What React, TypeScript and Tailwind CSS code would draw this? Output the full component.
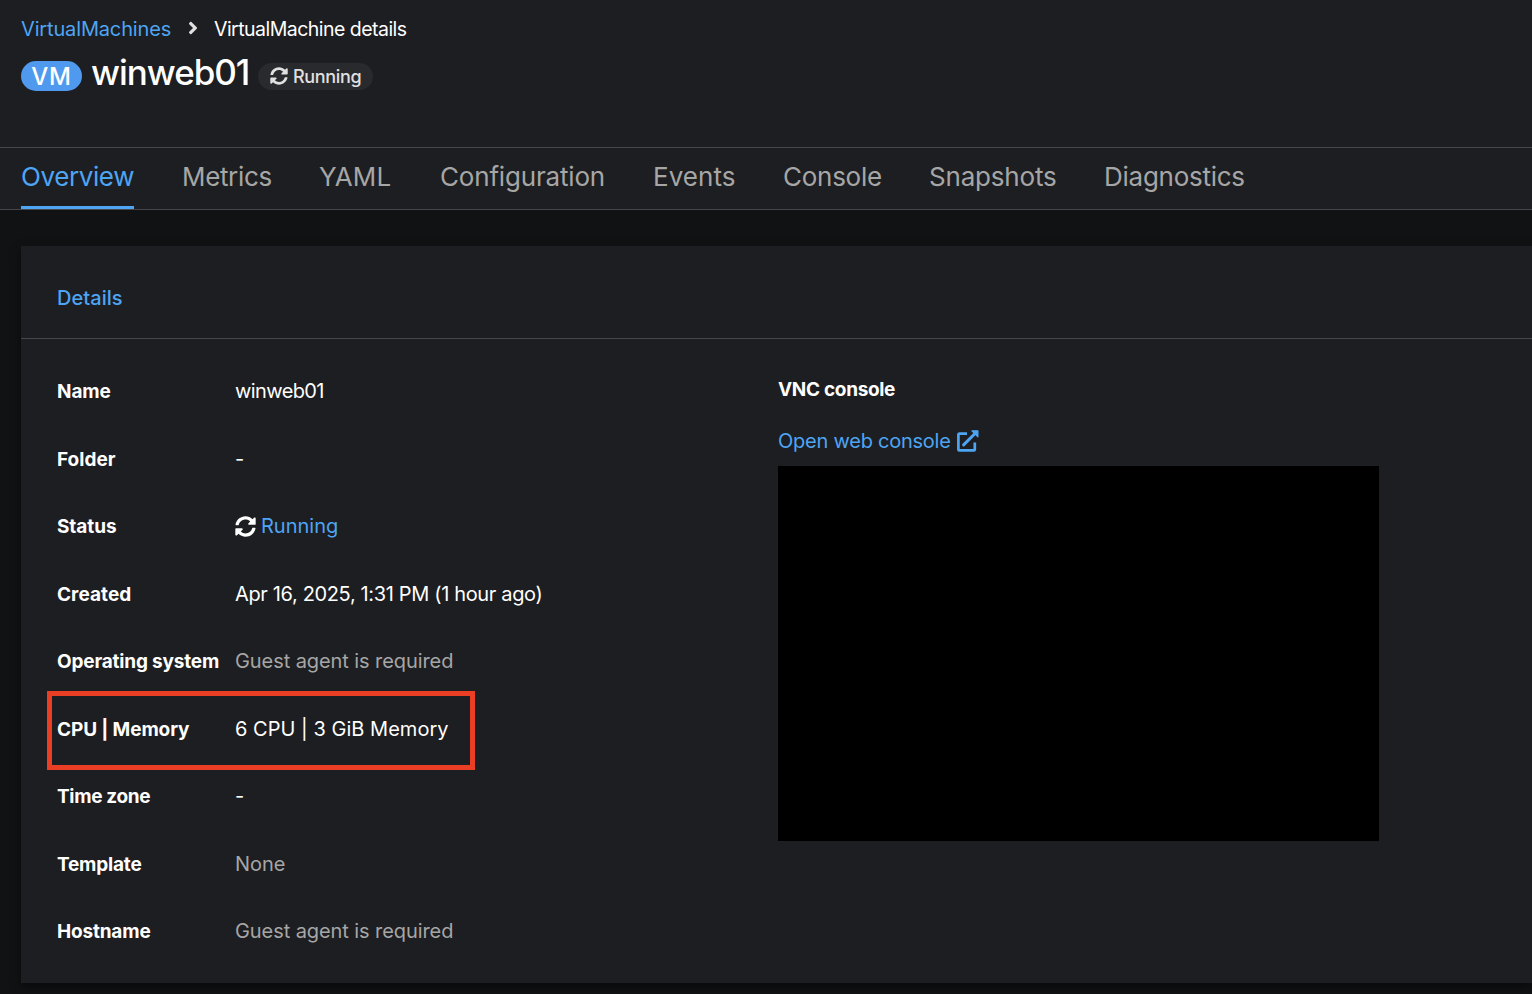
import type { ReactNode } from "react";
import { FaAngleRight, FaSyncAlt } from "react-icons/fa";

const tabs = [
  { label: "Overview", className: "w-[113px] tracking-[-0.4px]", active: true },
  { label: "Metrics", className: "w-[90px] tracking-[-0.35px]" },
  { label: "YAML", className: "w-[72px] -indent-px tracking-[0.1px]" },
  { label: "Configuration", className: "w-[165px] tracking-[-0.18px]" },
  { label: "Events", className: "w-[82px] tracking-[0.05px]" },
  { label: "Console", className: "w-[98px] tracking-[-0.27px]" },
  { label: "Snapshots", className: "w-[127px] tracking-[-0.19px]" },
  { label: "Diagnostics", className: "w-[142px] tracking-[-0.26px]" },
];

function Muted({ children }: { children: ReactNode }) {
  return <span className="tracking-[-0.08px] text-[#a6a6a6]">{children}</span>;
}

const details: { label: string; className: string; value: ReactNode }[] = [
  { label: "Name", className: "tracking-[-0.1px]", value: <span className="tracking-[-0.6px]">winweb01</span> },
  { label: "Folder", className: "tracking-[0px]", value: "-" },
  {
    label: "Status",
    className: "tracking-[-0.08px]",
    value: (
      <span className="flex items-center gap-[5px]">
        <FaSyncAlt className="size-[21px]" />
        <a className="text-[#4da5f4]">Running</a>
      </span>
    ),
  },
  {
    label: "Created",
    className: "tracking-[0.06px]",
    value: <span className="tracking-[-0.35px]">Apr 16, 2025, 1:31 PM (1 hour ago)</span>,
  },
  { label: "Operating system", className: "tracking-[-0.18px]", value: <Muted>Guest agent is required</Muted> },
  {
    label: "CPU | Memory",
    className: "tracking-[-0.12px]",
    value: <span className="tracking-[0.03px]">6 CPU | 3 GiB Memory</span>,
  },
  { label: "Time zone", className: "tracking-[-0.33px]", value: "-" },
  { label: "Template", className: "tracking-[-0.2px]", value: <Muted>None</Muted> },
  { label: "Hostname", className: "tracking-[-0.18px]", value: <Muted>Guest agent is required</Muted> },
];

function ExternalLinkIcon() {
  return (
    <svg
      viewBox="0 0 22 22"
      className="mb-px size-[22px]"
      fill="none"
      stroke="currentColor"
      strokeWidth="2.7"
      strokeLinejoin="round"
    >
      <path d="M10 3.6H2.3a.9.9 0 0 0-.9.9v14.9a.9.9 0 0 0 .9.9h14.6a.9.9 0 0 0 .9-.9v-6.9" />
      <path d="M6.6 14.9 17.8 3.7" strokeWidth="3" strokeLinecap="round" />
      <path d="M14.9.8h6v6z" fill="currentColor" strokeWidth="1.2" />
    </svg>
  );
}

export default function App() {
  return (
    <div className="h-[994px] w-full overflow-hidden bg-[#111214] font-['Inter',sans-serif] text-white">
      <header className="h-[147px] bg-[#1d1e21] px-[21px] pt-[15px]">
        <nav className="flex h-[28px] items-center leading-[28px]">
          <a className="w-[150px] text-[20px] tracking-[-0.15px] whitespace-nowrap text-[#4da5f4]">VirtualMachines</a>
          <FaAngleRight className="mr-[13px] mb-[2px] ml-[14px] h-[20px] w-[16px] text-[#e0e0e0]" />
          <span className="text-[19.5px] tracking-[-0.53px] whitespace-nowrap">VirtualMachine details</span>
        </nav>
        <div className="flex h-[66px] items-center">
          <span className="flex h-[30px] w-[61px] items-center justify-center rounded-full bg-[#4f9aee] pt-px text-[24px] font-medium tracking-[0.8px]">
            VM
          </span>
          <h1 className="ml-[9px] w-[159px] pb-[7px] text-[35px] font-medium tracking-[-1.05px] whitespace-nowrap">
            winweb01
          </h1>
          <span className="ml-[8px] flex h-[27px] w-[115px] items-center gap-[5px] rounded-full bg-[#292a2d] pl-[12px] text-[18px] font-medium tracking-[-0.34px] text-[#e0e0e0]">
            <FaSyncAlt className="size-[18px]" />
            Running
          </span>
        </div>
      </header>

      <nav className="flex h-[63px] gap-[48px] border-y border-[#45474b] bg-[#1d1e21] px-[21px]">
        {tabs.map((tab) => (
          <a
            key={tab.label}
            className={`flex h-[61px] shrink-0 items-center border-b-[3px] pb-px text-[26px] whitespace-nowrap ${
              tab.active ? "border-[#4da5f4] text-[#4da5f4]" : "border-transparent text-[#a6a6a6]"
            } ${tab.className}`}
          >
            {tab.label}
          </a>
        ))}
      </nav>

      <main className="pt-[36px] pl-[21px]">
        <section className="h-[737px] bg-[#1d1e21] shadow-[0_4px_9px_rgba(0,0,0,0.5)]">
          <div className="flex h-[93px] items-center border-b border-[#45474b] px-[36px] pt-[12px]">
            <h2 className="text-[20px] font-medium tracking-[0.05px] text-[#4da5f4]">Details</h2>
          </div>
          <div className="flex pl-[36px]">
            <dl className="w-[721px] pt-[19px]">
              {details.map((row) => (
                <div key={row.label} className="relative flex h-[67.5px] items-center">
                  <dt className={`w-[178px] pt-px text-[19px] font-bold whitespace-nowrap ${row.className}`}>
                    {row.label}
                  </dt>
                  <dd className="pb-px text-[20px] whitespace-nowrap">{row.value}</dd>
                  {row.label === "CPU | Memory" && (
                    <div className="absolute -top-[5px] -left-[10.5px] h-[79px] w-[428px] border-[5px] border-[#ea3f25]" />
                  )}
                </div>
              ))}
            </dl>
            <div className="pt-[36px]">
              <h3 className="h-[30px] text-[19px] leading-[30px] font-bold tracking-[-0.32px]">VNC console</h3>
              <a className="mt-[21px] flex h-[30px] items-center gap-[6px] text-[20px] tracking-[-0.24px] text-[#4da5f4]">
                <span>Open web console</span>
                <ExternalLinkIcon />
              </a>
              <div className="mt-[10px] h-[375px] w-[601px] bg-black" />
            </div>
          </div>
        </section>
      </main>
    </div>
  );
}
